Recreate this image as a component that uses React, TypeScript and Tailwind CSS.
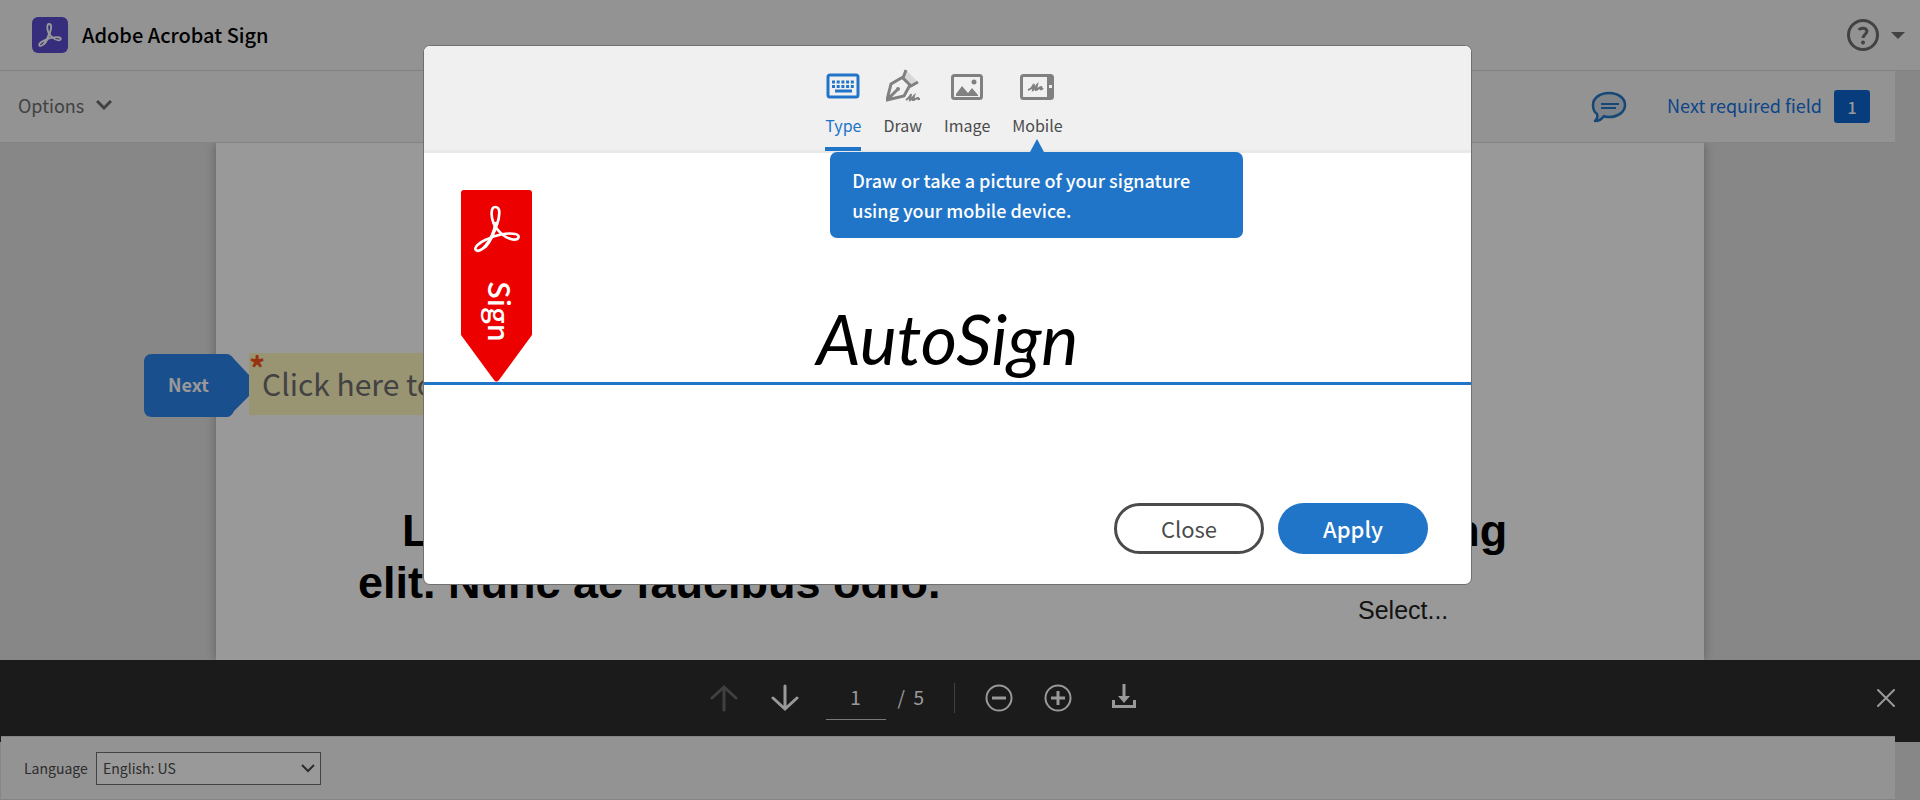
import React, { useState } from 'react';

type TabId = 'type' | 'draw' | 'image' | 'mobile';

const AcrobatMark: React.FC<{ className?: string; strokeWidth: number }> = ({ className, strokeWidth }) => (
    <svg viewBox="-3 -1 144 144" className={className} fill="none" stroke="currentColor" strokeWidth={strokeWidth} aria-hidden="true">
        <path d="M63 5C51 5 50 30 58 52C68 76 98 103 120 103C136 103 139 89 124 86C98 81 62 90 38 102C14 113 0 126 5 133C12 142 32 131 46 107C60 82 76 44 76 22C76 9 71 5 63 5Z" />
        <path d="M66 50C62 78 48 108 32 126" strokeWidth={strokeWidth + 2} />
    </svg>
);

const KeyboardIcon = () => (
    <svg viewBox="0 0 34 34" className="size-[34px]" fill="none" aria-hidden="true">
        <rect x="2" y="6" width="30" height="22" rx="2" stroke="currentColor" strokeWidth="3" />
        <path d="M6 13h22M6 17.500h22" stroke="currentColor" strokeWidth="3" strokeDasharray="3 1.700" />
        <path d="M9 22h17" stroke="currentColor" strokeWidth="3" />
    </svg>
);

const PenIcon = () => (
    <svg viewBox="0 0 34 34" className="size-[34px]" fill="none" stroke="currentColor" strokeWidth="3" aria-hidden="true">
        <path d="M21 2l10 10-6 4-7-7z" fill="#d8d8d8" stroke="none" />
        <path d="M20 1l-3 8 8 8 7-4M17 8L5 15 1 31l17-4 6-11M1 31l10-10" />
        <circle cx="12" cy="20" r="2" fill="currentColor" stroke="none" />
        <path d="M20 31c3-2 5-5 5-6l-1 6c2-1 3-3 4-4l-1 4c2 0 3-2 5-2 0 2 1 1 2 1" strokeWidth="2" />
    </svg>
);

const PictureIcon = () => (
    <svg viewBox="0 0 34 34" className="size-[34px]" aria-hidden="true">
        <rect x="2.500" y="6.500" width="29" height="23" rx="2" fill="none" stroke="currentColor" strokeWidth="3" />
        <path d="M6 27v-2l6-8 6 7 4-5 6 7v1z" fill="currentColor" />
        <circle cx="24" cy="13" r="2.500" fill="currentColor" />
    </svg>
);

const TabletIcon = () => (
    <svg viewBox="0 0 34 34" className="size-[34px]" fill="none" stroke="currentColor" aria-hidden="true">
        <rect x="1.500" y="6.500" width="31" height="23" rx="2" strokeWidth="3" />
        <path d="M30 6v24" strokeWidth="6" />
        <rect x="29" y="16" width="3" height="3" fill="#f0f0f0" stroke="none" />
        <path d="M8 21c4-1 5-4 6-6l-1 6c2-1 3-4 4-5l-1 5c2 0 3-3 5-3-1 3 0 3 2 1" strokeWidth="2" />
    </svg>
);

const tabs: { id: TabId; label: string; icon: React.ReactNode }[] = [
    { id: 'type', label: 'Type', icon: <KeyboardIcon /> },
    { id: 'draw', label: 'Draw', icon: <PenIcon /> },
    { id: 'image', label: 'Image', icon: <PictureIcon /> },
    { id: 'mobile', label: 'Mobile', icon: <TabletIcon /> },
];

const Header = () => (
    <header className="flex h-[71px] shrink-0 items-center border-b border-[#d8d8d8] bg-[#f5f5f5] pr-[15px] pl-8">
        <span className="flex size-9 items-center justify-center rounded-md bg-[#5b4bd0] text-white">
            <AcrobatMark className="size-6" strokeWidth={11} />
        </span>
        <h1 className="ml-[14px] text-[20px] font-medium text-black">Adobe Acrobat Sign</h1>
        <button aria-label="Help" className="ml-auto flex items-center gap-3 text-[#6e6e6e]">
            <svg viewBox="0 0 32 32" className="size-8" fill="none" stroke="currentColor" aria-hidden="true">
                <circle cx="16" cy="16" r="14.500" strokeWidth="3" />
                <path d="M12 11c1-2 7-3 8 1 0 3-4 4-4 7" strokeWidth="3" />
                <circle cx="16" cy="23.500" r="2" fill="currentColor" stroke="none" />
            </svg>
            <svg viewBox="0 0 14 7" className="h-[7px] w-[14px]" fill="currentColor" aria-hidden="true">
                <path d="M0 0h14L7 7z" />
            </svg>
        </button>
    </header>
);

const OptionsBar = () => (
    <div className="mr-[25px] flex h-[72px] shrink-0 items-center border-b border-[#dadada] bg-[#f5f5f5] pr-[25px] pl-[18px]">
        <button className="flex items-center gap-3 pb-1 text-[18px] text-[#6e6e6e]">
            Options
            <svg viewBox="0 0 16 10" className="h-[10px] w-4" fill="none" stroke="currentColor" strokeWidth="3" aria-hidden="true">
                <path d="M1 1l7 7 7-7" />
            </svg>
        </button>
        <button aria-label="Comments" className="ml-auto text-[#2578c6]">
            <svg viewBox="0 0 36 32" className="h-8 w-9" aria-hidden="true">
                <path
                    d="M18 2c9 0 16 5 16 12s-7 12-16 12c-2 0-4 0-5-1-2 3-5 5-9 5 2-2 3-4 2-7-3-2-4-5-4-9C2 7 9 2 18 2z"
                    fill="#d2dbe5"
                    stroke="currentColor"
                    strokeWidth="2.500"
                    strokeLinejoin="round"
                />
                <path d="M10 13h18M10 17h15" stroke="currentColor" strokeWidth="2" />
            </svg>
        </button>
        <a href="#next" className="ml-10 flex items-center gap-3 text-[18px] text-[#1473e6]">
            <span className="pb-1">Next required field</span>
            <span className="flex h-[33px] w-9 items-center justify-center rounded-[3px] bg-[#0d66d0] text-base font-medium text-white">1</span>
        </a>
    </div>
);

const DocumentPage = () => (
    <main className="flex min-h-0 flex-1 justify-center overflow-hidden bg-[#e1e1e1]">
        <div className="w-[1488px] shrink-0 bg-white pt-[210px] shadow-[0_0_10px_rgba(0,0,0,0.3)]">
            <div className="relative ml-[33px] w-[560px]">
                <button className="absolute top-px right-full flex h-[63px] w-[105px] items-center pb-1 text-[18px] font-bold text-white">
                    <svg viewBox="0 0 105 63" className="absolute inset-0" fill="#2b84ea" aria-hidden="true">
                        <path d="M8 0h74c4 0 6 2 8 5l15 16v21L90 57c-2 4-4 6-8 6H8c-5 0-8-3-8-8V8c0-5 3-8 8-8z" />
                    </svg>
                    <span className="relative pl-6">Next</span>
                </button>
                <span className="absolute top-0 left-0 text-[32px] leading-7 font-bold text-[#f8541c]">*</span>
                <input
                    aria-label="Signature field"
                    placeholder="Click here to sign"
                    className="block h-[62px] w-full bg-[#fff7bf] pb-[2px] pl-[13px] text-[30px] text-[#6e6e6e] placeholder:text-[#6e6e6e]"
                />
            </div>
            <h2 className="mt-[90px] ml-[142px] w-[1200px] font-['Liberation_Sans',Arial,sans-serif] text-[45px] leading-[52px] font-bold text-black">
                <span className="ml-11">Lorem ipsum dolor sit amet, consectetur adipiscing</span>
                <br />
                elit. Nunc ac faucibus odio.
            </h2>
            <button className="-mt-[14px] ml-[1142px] block font-['Liberation_Sans',Arial,sans-serif] text-[25px] leading-[30px] text-[#222]">Select...</button>
        </div>
    </main>
);

const PageControls = () => (
    <nav aria-label="Page controls" className="flex h-[82px] shrink-0 items-start bg-[#2d2d2d] pr-[25px] text-white">
        <div className="flex h-[76px] flex-1 items-center justify-center pr-8 text-[19px]">
            <button aria-label="Previous page" className="text-[#6b6b6b]">
                <svg viewBox="0 0 28 28" className="size-7" fill="none" stroke="currentColor" strokeWidth="3" strokeLinecap="round" aria-hidden="true">
                    <path d="M14 26V3M2 14L14 3l12 11" />
                </svg>
            </button>
            <button aria-label="Next page" className="ml-[33px]">
                <svg viewBox="0 0 28 28" className="size-7" fill="none" stroke="currentColor" strokeWidth="3" strokeLinecap="round" aria-hidden="true">
                    <path d="M14 2v23M2 14l12 11 12-11" />
                </svg>
            </button>
            <input aria-label="Page number" defaultValue="1" className="mt-1 ml-[27px] h-10 w-[60px] border-b border-[#c8c8c8] bg-transparent pb-[6px] text-center" />
            <span className="ml-3 w-[26px] pb-[2px] whitespace-pre">{'/  5'}</span>
            <span className="mx-[30px] h-[30px] w-px bg-[#6b6b6b]" />
            <button aria-label="Zoom out">
                <svg viewBox="0 0 28 28" className="size-7" fill="none" stroke="currentColor" aria-hidden="true">
                    <circle cx="14" cy="14" r="12.500" strokeWidth="2" />
                    <path d="M7 14h14" strokeWidth="3" />
                </svg>
            </button>
            <button aria-label="Zoom in" className="ml-[31px]">
                <svg viewBox="0 0 28 28" className="size-7" fill="none" stroke="currentColor" aria-hidden="true">
                    <circle cx="14" cy="14" r="12.500" strokeWidth="2" />
                    <path d="M7 14h14M14 7v14" strokeWidth="3" />
                </svg>
            </button>
            <button aria-label="Download" className="ml-10">
                <svg viewBox="0 0 24 28" className="h-7 w-6" fill="none" stroke="currentColor" strokeWidth="3" aria-hidden="true">
                    <path d="M12 0v13M1.500 16v6.500h21V16" />
                    <path d="M6 12h12l-6 7z" fill="currentColor" stroke="none" />
                </svg>
            </button>
        </div>
        <button aria-label="Close controls" className="flex h-[76px] w-[18px] items-center">
            <svg viewBox="0 0 18 18" className="size-[18px]" fill="none" stroke="currentColor" strokeWidth="2" strokeLinecap="round" aria-hidden="true">
                <path d="M1 1l16 16M17 1L1 17" />
            </svg>
        </button>
    </nav>
);

const Footer = () => (
    <footer className="relative -mt-[6px] mr-[25px] ml-px flex h-16 shrink-0 items-center gap-2 border-y border-[#dcdcdc] bg-[#f5f5f5] pl-[23px] text-[14px] text-[#4b4b4b]">
        <label htmlFor="language" className="w-16">Language</label>
        <div className="relative">
            <select id="language" className="block h-[33px] w-[225px] appearance-none border border-[#707070] bg-white pl-[6px]">
                <option>English: US</option>
            </select>
            <svg viewBox="0 0 14 9" className="pointer-events-none absolute top-3 right-[6px] h-[9px] w-[14px]" fill="none" stroke="currentColor" strokeWidth="2" aria-hidden="true">
                <path d="M1 1l6 6 6-6" />
            </svg>
        </div>
    </footer>
);

const SignTag = () => (
    <svg viewBox="0 0 71 192" className="ml-[37px] h-[192px] w-[71px]" role="img" aria-label="Sign">
        <path d="M3 0h65c2 0 3 1 3 3v142L38 190c-2 2-3 2-5 0L0 145V3C0 1 1 0 3 0z" fill="#ed0000" />
        <g transform="translate(12 15)" className="text-white">
            <AcrobatMark className="h-[48px] w-[48px]" strokeWidth={8} />
        </g>
        <text x="91" y="-27" transform="rotate(90)" fontSize="29" fontWeight="500" fill="#fff">Sign</text>
    </svg>
);

const SignatureDialog = () => {
    const [activeTab, setActiveTab] = useState<TabId>('type');
    const [signature, setSignature] = useState('AutoSign');

    return (
        <div role="dialog" aria-label="Signature" className="w-[1049px] overflow-hidden rounded-[7px] border border-[#707070] bg-white">
            <div role="tablist" className="flex h-[107px] justify-center gap-[22px] border-b-3 border-[#e9e9e9] bg-[#f0f0f0] pt-[23px] pr-[7px]">
                {tabs.map((tab) => (
                    <div key={tab.id} className="relative">
                        <button
                            role="tab"
                            aria-selected={activeTab === tab.id}
                            onClick={() => setActiveTab(tab.id)}
                            className={`flex h-[82px] flex-col items-center text-base ${activeTab === tab.id ? 'border-b-4 border-[#2175c8] text-[#2175c8]' : 'text-[#808080]'}`}
                        >
                            {tab.icon}
                            <span className={activeTab === tab.id ? 'mt-[10px]' : 'mt-[10px] text-[#4b4b4b]'}>{tab.label}</span>
                        </button>
                        {tab.id === 'mobile' && (
                            <div role="tooltip" className="absolute top-[83px] -left-[182px] z-20 w-[413px] rounded-[7px] bg-[#2175c8] px-[22px] py-[13px] text-[18px] leading-[30px] font-medium text-white">
                                <svg viewBox="0 0 14 13" className="absolute bottom-full left-[200px] h-[13px] w-[14px]" fill="#2175c8" aria-hidden="true">
                                    <path d="M7 0l7 13H0z" />
                                </svg>
                                Draw or take a picture of your signature
                                <br />
                                using your mobile device.
                            </div>
                        )}
                    </div>
                ))}
            </div>
            <div className="grid h-[229px] grid-cols-[1fr_320px_1fr] items-end">
                <SignTag />
                <input
                    aria-label="Type your signature"
                    value={signature}
                    onChange={(e) => setSignature(e.target.value)}
                    className="relative z-10 -mb-4 h-[120px] bg-transparent text-center font-[Lato,cursive] text-[70px] text-black italic"
                />
            </div>
            <div className="h-[3px] bg-[#2175c8]" />
            <div className="flex justify-end gap-[14px] px-[43px] pt-[118px] pb-[30px] text-[22px]">
                <button className="h-[51px] w-[150px] rounded-full border-3 border-[#4b4b4b] pb-[2px] text-[#4b4b4b]">Close</button>
                <button className="h-[51px] w-[150px] rounded-full bg-[#2175c8] pb-[2px] font-medium text-white">Apply</button>
            </div>
        </div>
    );
};

const App: React.FC = () => (
    <div className="relative flex h-screen flex-col overflow-hidden bg-[#e1e1e1] font-['Noto_Sans_CJK_SC','Open_Sans',sans-serif] leading-6">
        <Header />
        <OptionsBar />
        <DocumentPage />
        <PageControls />
        <Footer />
        {/* Modal backdrop */}
        <div className="absolute inset-0 z-10 flex items-start justify-center bg-black/40 pt-[45px] pr-[25px]">
            <SignatureDialog />
        </div>
    </div>
);

export default App;
